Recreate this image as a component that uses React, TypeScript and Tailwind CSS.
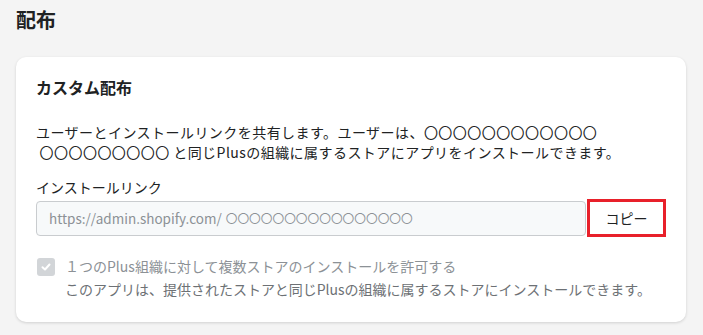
import React from "react";

export default function App() {
  const font = { fontFamily: '"Noto Sans CJK JP", "Noto Sans", sans-serif' };
  return (
    <div className="w-[703px] h-[335px] bg-[#f4f4f4] text-[#202223] overflow-hidden" style={font}>
      <div className="px-4 pt-[5px]">
        <h1 className="text-[20px] font-bold leading-[30px]">配布</h1>
        <div className="mt-[22px] w-[670px] bg-white rounded-[10px] shadow-[0_1px_3px_rgba(0,0,0,0.15)] px-5 pt-[16px] pb-[21px]">
          <h2 className="text-[16px] font-bold leading-[28px]">カスタム配布</h2>
          <p className="mt-[21px] text-[14px] leading-[20px] tracking-[0.45px]">
            ユーザーとインストールリンクを共有します。ユーザーは、〇〇〇〇〇〇〇〇〇〇〇〇
            <br />
            &nbsp;〇〇〇〇〇〇〇〇〇 と同じPlusの組織に属するストアにアプリをインストールできます。
          </p>
          <div className="mt-[15px] text-[14px] leading-[20px]">インストールリンク</div>
          <div className="mt-[2px] flex items-center gap-[1px]">
            <div className="w-[550px] h-[35px] rounded-[4px] border border-[#c9cccf] bg-[#f7f9fa] flex items-center px-[12px] text-[13.5px] text-[#8c9196]">
              <span>https://admin.shopify.com/</span>
              <span className="ml-[4px] text-[11.7px] tracking-[0px]">〇〇〇〇〇〇〇〇〇〇〇〇〇〇〇〇</span>
            </div>
            <button className="w-[79px] h-[38px] border-[3px] border-[#e8202a] bg-white text-[14px] text-[#202223] flex items-center justify-center">
              コピー
            </button>
          </div>
          <div className="mt-[18px] flex gap-[10px]">
            <div className="mt-[3px] ml-[1px] w-[18px] h-[18px] rounded-[3px] bg-[#d2d5d8] flex items-center justify-center shrink-0">
              <svg width="12" height="12" viewBox="0 0 12 12" fill="none">
                <path d="M2.5 6.2 L5 8.5 L9.5 3.5" stroke="white" strokeWidth="2" strokeLinecap="round" strokeLinejoin="round" />
              </svg>
            </div>
            <div className="text-[14px] leading-[23px] text-[#8c9196]">
              <div>１つのPlus組織に対して複数ストアのインストールを許可する</div>
              <div className="text-[#6d7175]">このアプリは、提供されたストアと同じPlusの組織に属するストアにインストールできます。</div>
            </div>
          </div>
        </div>
      </div>
    </div>
  );
}
